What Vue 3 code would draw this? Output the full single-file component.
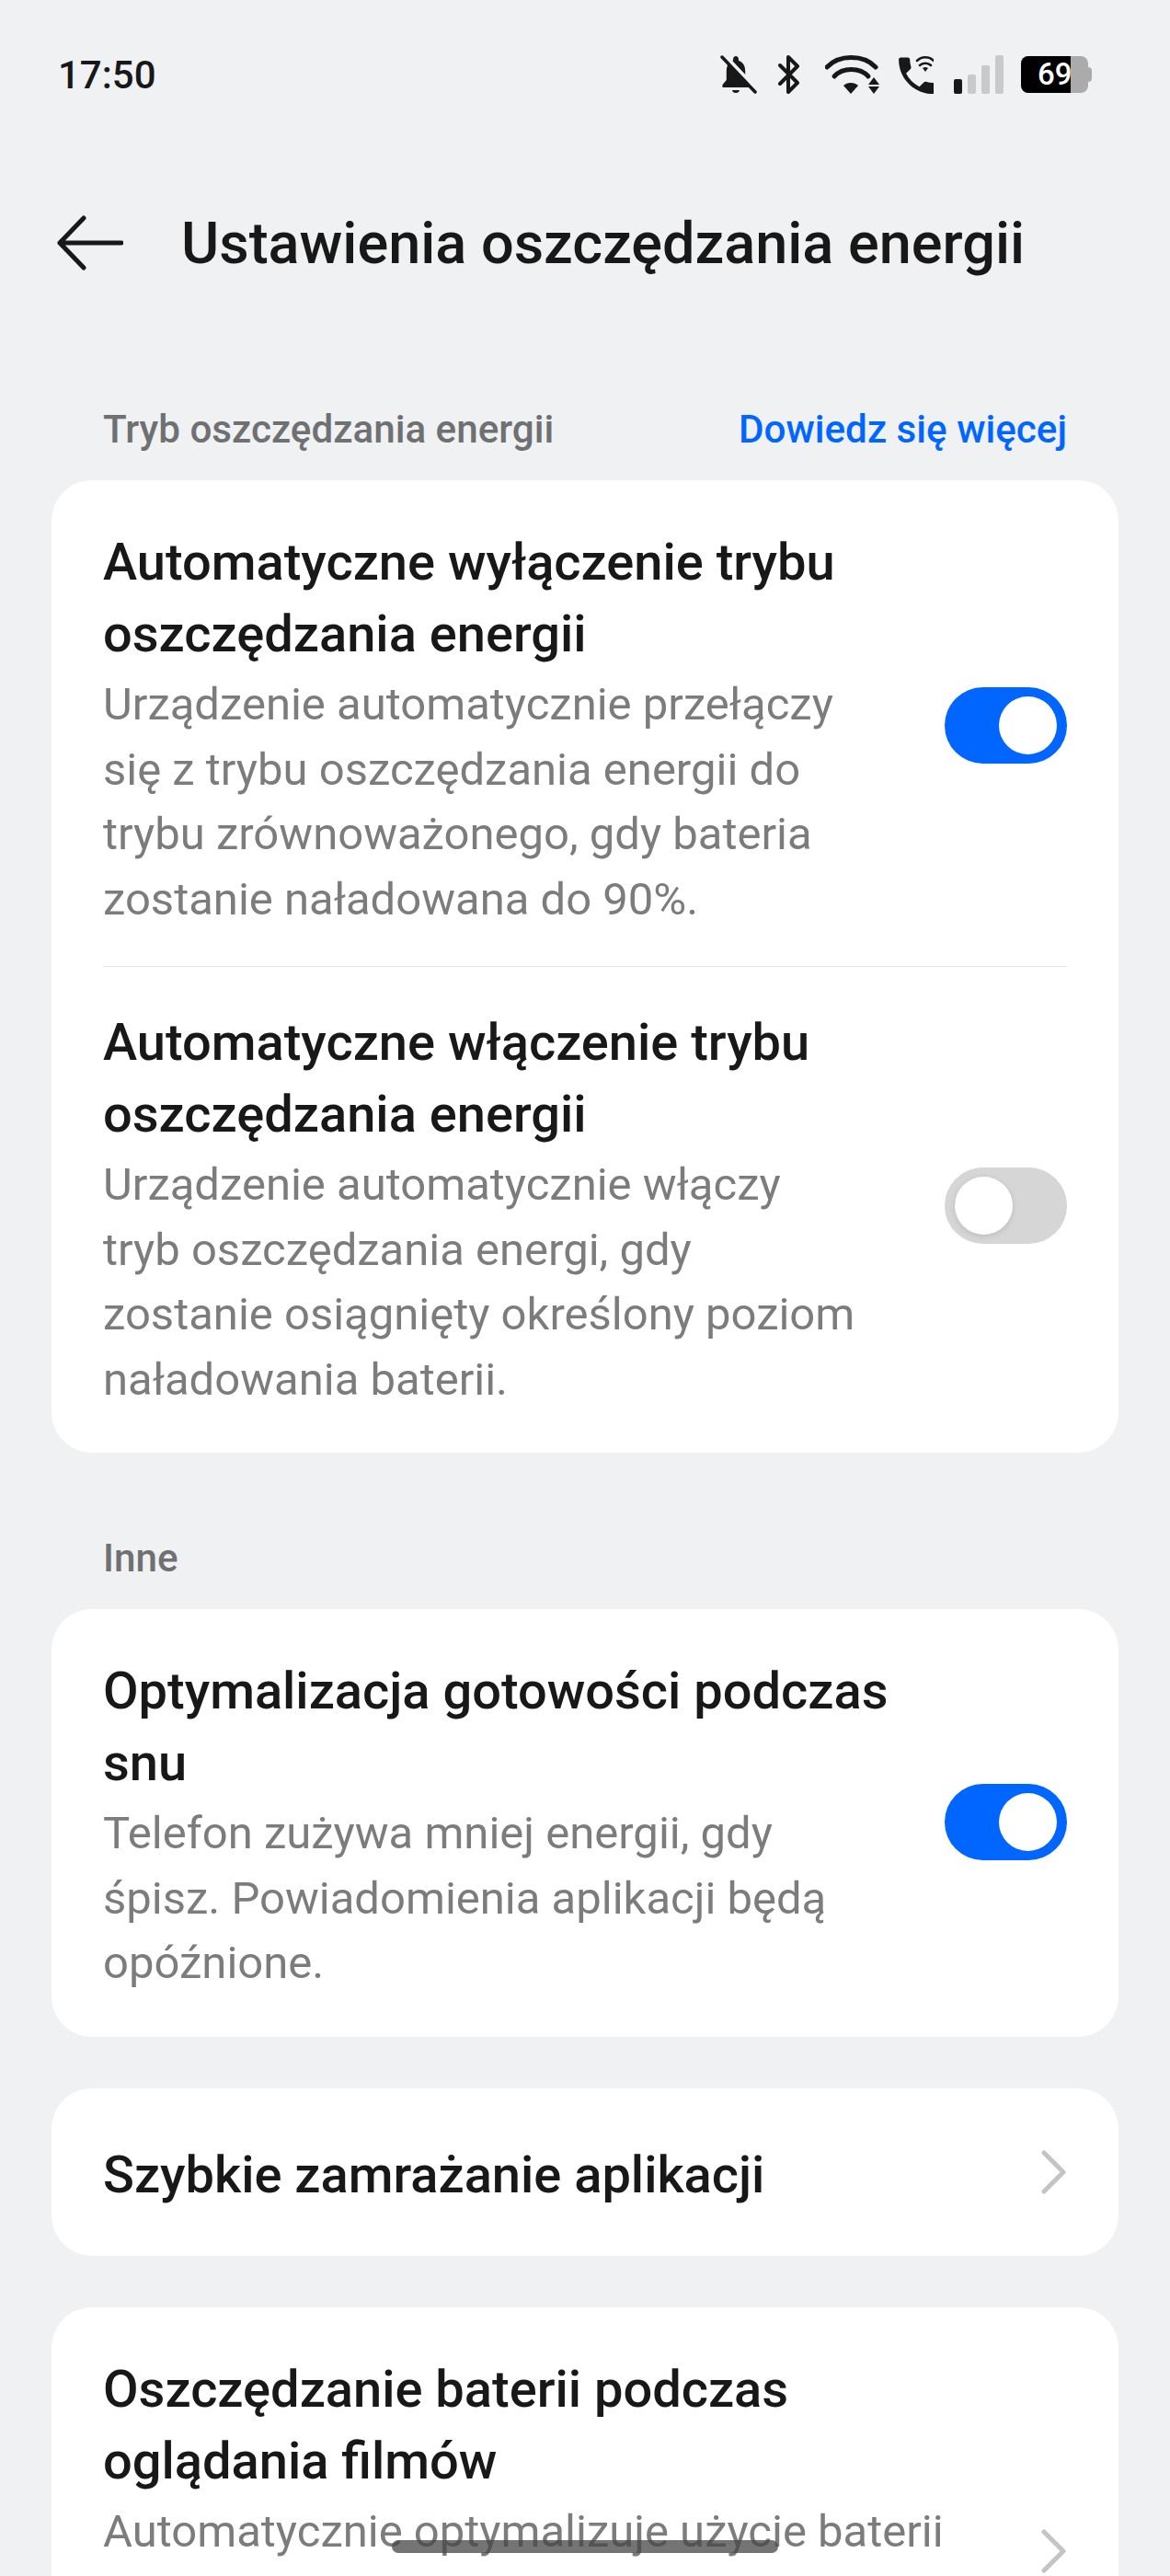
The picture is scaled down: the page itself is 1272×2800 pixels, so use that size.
<template>
  <div class="phone">
    <div class="status-bar">
      <span class="clock">17:50</span>
      <div class="status-icons">
        <svg class="ic-bell" viewBox="0 0 40 42" fill="#181818">
          <path transform="scale(.85 1)" d="M20 41c2.6 0 4.6-1.3 4.6-3h-9.2c0 1.700 2 3 4.600 3zM32 27V17.500C32 11.500 29 7.300 23.500 6V4.500C23.500 2.500 22 1 20 1s-3.500 1.500-3.500 3.500V6C11 7.300 8 11.500 8 17.500V27l-5 5v3h34v-3l-5-5z"/>
          <path d="M5 1 39 37" stroke="#f0f1f3" stroke-width="5"/>
          <path d="M2 2 38 40" stroke="#181818" stroke-width="3.500" stroke-linecap="round"/>
        </svg>
        <svg class="ic-bt" viewBox="0 0 24 42" fill="none" stroke="#181818" stroke-width="4" stroke-linejoin="round" stroke-linecap="round">
          <path d="M2 11 21 30 11 40V2l10 10L2 31"/>
        </svg>
        <svg class="ic-wifi" viewBox="0 0 60 42" fill="#181818">
          <path d="M2 13C15 -1 42 -1 55 13" fill="none" stroke="#181818" stroke-width="5" stroke-linecap="round"/>
          <path d="M10 23C19 13 38 13 47 23" fill="none" stroke="#181818" stroke-width="5" stroke-linecap="round"/>
          <path d="M20 33C24 29 32 29 36 33L28 42z"/>
          <path d="M53 24 59 32H47zM47 34H59L53 42z"/>
        </svg>
        <svg class="ic-call" viewBox="0 0 40 42" fill="#181818">
          <path transform="translate(-4.500 -4) scale(2.200)" d="M6.620 10.790c1.440 2.830 3.760 5.140 6.590 6.590l2.200-2.200c.27-.27.67-.36 1.020-.24 1.120.37 2.330.57 3.570.57.55 0 1 .45 1 1V20c0 .55-.45 1-1 1-9.390 0-17-7.610-17-17 0-.55.45-1 1-1h3.500c.55 0 1 .45 1 1 0 1.250.2 2.450.57 3.570.11.35.03.74-.25 1.020l-2.200 2.200z"/>
          <path d="M22 6C27 1 35 1 40 6M25 11C28 8 34 8 37 11" fill="none" stroke="#181818" stroke-width="2.500" stroke-linecap="round"/>
          <path d="M28 14C30 12.500 32 12.500 34 14L31 18z"/>
        </svg>
        <div class="signal">
          <i class="bar b1"></i><i class="bar b2"></i><i class="bar b3"></i><i class="bar b4"></i>
        </div>
        <div class="battery">
          <div class="batt-fill"></div>
          <span class="batt-text">69</span>
          <div class="batt-cap"></div>
        </div>
      </div>
    </div>

    <header class="top-bar">
      <svg class="back" viewBox="0 0 72 60" fill="none" stroke="#181818" stroke-width="5" stroke-linecap="round" stroke-linejoin="round">
        <path d="M70 30H3M29 3 3 30l26 27"/>
      </svg>
      <h1 class="page-title">Ustawienia oszczędzania energii</h1>
    </header>

    <div class="section-head first">
      <span>Tryb oszczędzania energii</span>
      <a class="more">Dowiedz się więcej</a>
    </div>
    <section class="card">
      <div class="row divided">
        <div class="text">
          <div class="title">Automatyczne wyłączenie trybu oszczędzania energii</div>
          <div class="desc">Urządzenie automatycznie przełączy się z trybu oszczędzania energii do trybu zrównoważonego, gdy bateria zostanie naładowana do 90%.</div>
        </div>
        <div class="toggle on"><span class="knob"></span></div>
      </div>
      <div class="row">
        <div class="text">
          <div class="title">Automatyczne włączenie trybu oszczędzania energii</div>
          <div class="desc">Urządzenie automatycznie włączy tryb oszczędzania energi, gdy zostanie osiągnięty określony poziom naładowania baterii.</div>
        </div>
        <div class="toggle"><span class="knob"></span></div>
      </div>
    </section>

    <div class="section-head">
      <span>Inne</span>
    </div>
    <section class="card">
      <div class="row">
        <div class="text">
          <div class="title">Optymalizacja gotowości podczas snu</div>
          <div class="desc">Telefon zużywa mniej energii, gdy śpisz. Powiadomienia aplikacji będą opóźnione.</div>
        </div>
        <div class="toggle on"><span class="knob"></span></div>
      </div>
    </section>

    <section class="card spaced">
      <div class="row single">
        <div class="title">Szybkie zamrażanie aplikacji</div>
        <svg class="chevron" viewBox="0 0 28 48" fill="none" stroke="#c4c4c4" stroke-width="5" stroke-linecap="round" stroke-linejoin="round"><path d="M3 3 24 24 3 45"/></svg>
      </div>
    </section>

    <section class="card spaced">
      <div class="row tall">
        <div class="text wide">
          <div class="title">Oszczędzanie baterii podczas oglądania filmów</div>
          <div class="desc">Automatycznie optymalizuje użycie baterii</div>
        </div>
        <svg class="chevron" viewBox="0 0 28 48" fill="none" stroke="#c4c4c4" stroke-width="5" stroke-linecap="round" stroke-linejoin="round"><path d="M3 3 24 24 3 45"/></svg>
      </div>
    </section>

    <div class="home-bar"></div>
  </div>
</template>

<script setup>
</script>

<style>
html, body {
  margin: 0;
  background: #f0f1f3;
}
</style>

<style scoped>
.phone {
  position: relative;
  width: 1272px;
  height: 2800px;
  overflow: hidden;
  background: #f0f1f3;
  font-family: Roboto, "Liberation Sans", sans-serif;
  color: #181818;
}

.status-bar {
  display: flex;
  justify-content: space-between;
  align-items: center;
  height: 42px;
  padding: 60px 85px 0 63px;
}
.clock {
  font-size: 42px;
  font-weight: 500;
}
.status-icons {
  display: flex;
  align-items: center;
}
.status-icons svg {
  display: block;
  height: 42px;
}
.ic-bell { width: 40px; }
.ic-bt { width: 24px; margin-left: 23px; }
.ic-wifi { width: 60px; margin-left: 27px; }
.ic-call { width: 40px; margin-left: 18px; }

.signal {
  display: flex;
  align-items: flex-end;
  gap: 6px;
  height: 42px;
  margin-left: 22px;
}
.bar {
  display: block;
  width: 9px;
  border-radius: 2px;
  background: #c9c9c9;
}
.b1 { height: 16px; background: #181818; }
.b2 { height: 21px; }
.b3 { height: 31px; }
.b4 { height: 42px; }

.battery {
  position: relative;
  width: 73px;
  height: 40px;
  margin-left: 19px;
  margin-right: 4px;
  border-radius: 8px;
  background: #ababab;
}
.batt-fill {
  position: absolute;
  left: 0;
  top: 0;
  bottom: 0;
  width: 54px;
  border-radius: 8px 0 0 8px;
  background: #000;
}
.batt-text {
  position: absolute;
  left: 18px;
  top: 0;
  font-size: 33px;
  line-height: 40px;
  font-weight: 500;
  color: #fff;
}
.batt-cap {
  position: absolute;
  right: -4px;
  top: 12px;
  width: 4px;
  height: 16px;
  border-radius: 0 4px 4px 0;
  background: #ababab;
}

.top-bar {
  display: flex;
  align-items: center;
  gap: 63px;
  margin-top: 132px;
  padding-left: 62px;
  height: 60px;
}
.back {
  width: 72px;
  height: 60px;
  flex: none;
}
.page-title {
  margin: 0;
  font-size: 63px;
  font-weight: 500;
  white-space: nowrap;
}

.section-head {
  display: flex;
  justify-content: space-between;
  align-items: center;
  height: 50px;
  margin-top: 89px;
  padding: 0 112px 0 112px;
  font-size: 42.200px;
  font-weight: 500;
  color: #6f7072;
}
.section-head.first {
  margin-top: 147px;
}
.more {
  color: #0066ff;
}

.card {
  margin: 31px 56px 0;
  padding: 7px 56px 0;
  border-radius: 44px;
  background: #fff;
}
.card.spaced {
  margin-top: 56px;
}
.row {
  display: flex;
  align-items: center;
  justify-content: space-between;
  padding: 43px 0 44px;
}
.row.divided {
  padding-bottom: 37px;
  border-bottom: 1.500px solid #e4e4e4;
}
.row.single {
  height: 175px;
  padding: 0;
  box-sizing: border-box;
}
.row.tall {
  min-height: 436px;
}
.text {
  width: 860px;
}
.text .desc {
  max-width: 830px;
}
.text.wide {
  width: 930px;
  align-self: flex-start;
}
.text.wide .desc {
  max-width: none;
}
.title {
  font-size: 56px;
  line-height: 78px;
  font-weight: 500;
  color: #181818;
}
.desc {
  margin-top: 3px;
  font-size: 49px;
  line-height: 70.500px;
  color: #7c7c7c;
}

.toggle {
  position: relative;
  flex: none;
  width: 133px;
  height: 83px;
  margin-bottom: 8px;
  border-radius: 42px;
  background: #d6d6d6;
}
.toggle.on {
  background: #0066ff;
}
.knob {
  position: absolute;
  top: 10px;
  left: 11px;
  width: 63px;
  height: 63px;
  border-radius: 50%;
  background: #fff;
  box-shadow: 0 2px 6px rgba(0, 0, 0, 0.12);
}
.toggle.on .knob {
  left: 59px;
  box-shadow: none;
}

.chevron {
  flex: none;
  width: 28px;
  height: 48px;
  margin-bottom: 6px;
}

.home-bar {
  position: absolute;
  left: 426px;
  top: 2761px;
  width: 420px;
  height: 14px;
  border-radius: 7px;
  background: rgba(70, 70, 70, 0.75);
}
</style>
